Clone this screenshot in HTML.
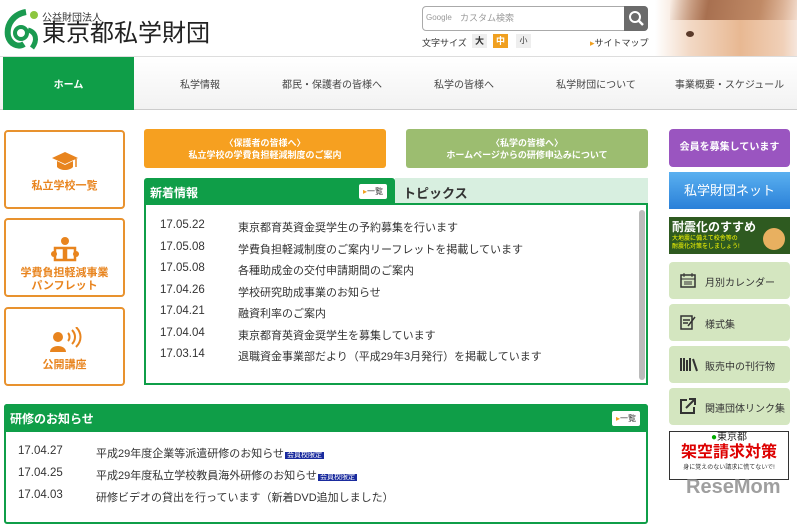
<!DOCTYPE html>
<html><head><meta charset="utf-8"><style>
*{margin:0;padding:0;box-sizing:border-box}
body{width:797px;height:508px;overflow:hidden;background:#fff;font-family:"Liberation Sans","Noto Sans CJK JP",sans-serif;position:relative;color:#333}
.a{position:absolute}
.nav{left:0;top:56px;width:797px;height:54px;background:linear-gradient(#fff,#f2f2f2);border-top:1px solid #ddd;border-bottom:1px solid #ccc}
.nav span{position:absolute;top:19px;font-size:10px;color:#444;text-align:center}
.lb{left:4px;width:121px;height:79px;border:2px solid #e8922e;border-radius:4px;color:#e8841e;font-size:11px;font-weight:bold;text-align:center}
.rb{left:669px;width:121px;height:37px;border-radius:4px;background:#d4e6c0;font-size:10px;color:#333}
.rb span{position:absolute;left:36px;top:12px}
.rb svg{position:absolute;left:10px;top:9px}
.row{position:absolute;font-size:11px;color:#333}
.row b{font-weight:normal;position:absolute;left:0;font-size:11.5px}
.row i{font-style:normal;position:absolute;left:78px;white-space:nowrap}
.tag{background:#1a2b9e;color:#fff;font-size:7px;padding:0 2px;margin-left:1px}
.ichi{background:#fff;border-radius:2px;font-size:8px;color:#333;padding:2px 4px}
.ichi:before{content:"▸";color:#f0a020}
</style></head><body>
<!-- logo -->
<svg class="a" style="left:4px;top:8px" width="40" height="42" viewBox="0 0 40 42"><path d="M22 4C10 6 2 16 4 28c2 8 10 12 16 8" fill="none" stroke="#1a9a50" stroke-width="6"/><circle cx="17" cy="25" r="6" fill="none" stroke="#1a9a50" stroke-width="4"/><path d="M24 22c8 2 10 10 4 18" fill="none" stroke="#1a9a50" stroke-width="5"/><circle cx="30" cy="7" r="4" fill="#8cc63f"/></svg>
<div class="a" style="left:42px;top:9px;font-size:10px;color:#333">公益財団法人</div>
<div class="a" style="left:42px;top:20px;font-size:24px;color:#222;line-height:28px">東京都私学財団</div>
<!-- search -->
<div class="a" style="left:422px;top:6px;width:226px;height:25px;border:1px solid #aaa;border-radius:4px;background:#fff"></div>
<div class="a" style="left:426px;top:13px;font-size:8px;color:#999">Google</div>
<div class="a" style="left:460px;top:11px;font-size:9px;color:#999">カスタム検索</div>
<div class="a" style="left:624px;top:6px;width:24px;height:25px;background:#6b6b6b;border-radius:0 4px 4px 0"></div>
<svg class="a" style="left:627px;top:9px" width="18" height="18"><circle cx="8" cy="8" r="5" fill="none" stroke="#fff" stroke-width="2"/><path d="M12 12l4 4" stroke="#fff" stroke-width="2.5"/></svg>
<div class="a" style="left:422px;top:36px;font-size:9px;color:#333">文字サイズ</div>
<div class="a" style="left:472px;top:34px;width:15px;height:14px;background:#eee;font-size:9px;text-align:center;line-height:14px;font-weight:bold">大</div>
<div class="a" style="left:493px;top:34px;width:15px;height:14px;background:#f0a020;color:#fff;font-size:9px;text-align:center;line-height:14px;font-weight:bold">中</div>
<div class="a" style="left:516px;top:34px;width:15px;height:14px;background:#eee;font-size:8px;text-align:center;line-height:14px">小</div>
<div class="a" style="left:590px;top:36px;font-size:9px;color:#333"><span style="color:#f0a020">▸</span>サイトマップ</div>
<div class="a" style="left:655px;top:0;width:142px;height:56px;background:linear-gradient(90deg,#fff 0%,#f2d8c4 25%,#e8b892 60%,#f0d0b8 90%,#f6e6dc)"></div>
<div class="a" style="left:670px;top:0;width:127px;height:20px;background:linear-gradient(100deg,rgba(255,255,255,0),#a87050 30%,#c08a66 70%,rgba(240,210,190,.5));"></div>
<div class="a" style="left:686px;top:31px;width:8px;height:6px;background:#5a3a2a;border-radius:50%"></div>
<!-- nav -->
<div class="a nav">
<div class="a" style="left:3px;top:0;width:131px;height:53px;background:#0f9e48"></div>
<span style="left:3px;width:131px;color:#fff;font-weight:bold">ホーム</span>
<span style="left:134px;width:132px">私学情報</span>
<span style="left:266px;width:132px">都民・保護者の皆様へ</span>
<span style="left:398px;width:132px">私学の皆様へ</span>
<span style="left:530px;width:132px">私学財団について</span>
<span style="left:662px;width:135px">事業概要・スケジュール</span>
</div>
<!-- left boxes -->
<div class="a lb" style="top:130px"><svg style="margin-top:18px" width="28" height="22" viewBox="0 0 28 22"><path d="M14 2L1 8l13 6 13-6z" fill="#e8841e"/><path d="M6 11v6c4 4 12 4 16 0v-6l-8 4z" fill="#e8841e"/><path d="M25 9v8" stroke="#e8841e" stroke-width="1.5"/></svg><div style="margin-top:2px">私立学校一覧</div></div>
<div class="a lb" style="top:218px"><svg style="margin-top:16px" width="30" height="28" viewBox="0 0 30 28"><circle cx="15" cy="5" r="4" fill="#e8841e"/><path d="M5 12h9v12H5zM16 12h9v12h-9z" fill="none" stroke="#e8841e" stroke-width="2.5"/><circle cx="4" cy="18" r="3" fill="#e8841e"/><circle cx="26" cy="18" r="3" fill="#e8841e"/></svg><div style="line-height:13px">学費負担軽減事業<br>パンフレット</div></div>
<div class="a lb" style="top:307px"><svg style="margin-top:18px" width="34" height="26" viewBox="0 0 34 26"><circle cx="10" cy="10" r="5" fill="#e8841e"/><path d="M2 25c0-8 16-8 16 0z" fill="#e8841e"/><path d="M20 6c2 2 2 6 0 8M24 3c4 4 4 10 0 14M28 0c6 6 6 14 0 20" fill="none" stroke="#e8841e" stroke-width="2"/></svg><div>公開講座</div></div>
<!-- top buttons -->
<div class="a" style="left:144px;top:129px;width:242px;height:39px;background:#f6a020;border-radius:3px;color:#fff;font-size:9px;font-weight:bold;text-align:center;line-height:12px;padding-top:8px">〈保護者の皆様へ〉<br>私立学校の学費負担軽減制度のご案内</div>
<div class="a" style="left:406px;top:129px;width:242px;height:39px;background:#9cbd70;border-radius:3px;color:#fff;font-size:9px;font-weight:bold;text-align:center;line-height:12px;padding-top:8px">〈私学の皆様へ〉<br>ホームページからの研修申込みについて</div>
<!-- news -->
<div class="a" style="left:395px;top:178px;width:253px;height:25px;background:#d8efe0"></div>
<div class="a" style="left:403px;top:183px;font-size:13px;color:#333;font-weight:bold">トピックス</div>
<div class="a" style="left:144px;top:178px;width:251px;height:26px;background:#0f9e48;border-radius:3px 3px 0 0"></div>
<div class="a" style="left:150px;top:184px;font-size:12px;color:#fff;font-weight:bold">新着情報</div>
<div class="a ichi" style="left:359px;top:184px">一覧</div>
<div class="a" style="left:144px;top:203px;width:504px;height:182px;border:2px solid #0f9e48"></div>
<div class="a" style="left:639px;top:210px;width:6px;height:170px;background:#bbb;border-radius:3px"></div>
<div class="row" style="left:160px;top:219px"><b>17.05.22</b><i>東京都育英資金奨学生の予約募集を行います</i></div>
<div class="row" style="left:160px;top:241px"><b>17.05.08</b><i>学費負担軽減制度のご案内リーフレットを掲載しています</i></div>
<div class="row" style="left:160px;top:262px"><b>17.05.08</b><i>各種助成金の交付申請期間のご案内</i></div>
<div class="row" style="left:160px;top:284px"><b>17.04.26</b><i>学校研究助成事業のお知らせ</i></div>
<div class="row" style="left:160px;top:305px"><b>17.04.21</b><i>融資利率のご案内</i></div>
<div class="row" style="left:160px;top:327px"><b>17.04.04</b><i>東京都育英資金奨学生を募集しています</i></div>
<div class="row" style="left:160px;top:348px"><b>17.03.14</b><i>退職資金事業部だより（平成29年3月発行）を掲載しています</i></div>
<!-- training -->
<div class="a" style="left:4px;top:404px;width:644px;height:120px;border:2px solid #0f9e48;border-radius:3px"></div>
<div class="a" style="left:4px;top:404px;width:644px;height:28px;background:#0f9e48;border-radius:3px 3px 0 0"></div>
<div class="a" style="left:10px;top:410px;font-size:12px;color:#fff;font-weight:bold">研修のお知らせ</div>
<div class="a ichi" style="left:612px;top:411px">一覧</div>
<div class="row" style="left:18px;top:445px"><b>17.04.27</b><i>平成29年度企業等派遣研修のお知らせ<span class="tag">会員校限定</span></i></div>
<div class="row" style="left:18px;top:467px"><b>17.04.25</b><i>平成29年度私立学校教員海外研修のお知らせ<span class="tag">会員校限定</span></i></div>
<div class="row" style="left:18px;top:489px"><b>17.04.03</b><i>研修ビデオの貸出を行っています（新着DVD追加しました）</i></div>
<!-- right -->
<div class="a" style="left:669px;top:129px;width:121px;height:38px;background:#9a55c0;border-radius:4px;color:#fff;font-size:10px;font-weight:bold;text-align:center;line-height:38px">会員を募集しています</div>
<div class="a" style="left:669px;top:172px;width:121px;height:37px;background:linear-gradient(#5ab0f0,#2a80d8);color:#fff;font-size:13px;text-align:center;line-height:37px">私学財団ネット</div>
<div class="a" style="left:669px;top:217px;width:121px;height:37px;background:#2e5a20"></div>
<div class="a" style="left:672px;top:218px;font-size:12px;color:#fff;font-weight:bold">耐震化のすすめ</div>
<div class="a" style="left:672px;top:235px;font-size:6px;color:#ff0;line-height:8px">大地震に備えて校舎等の<br>耐震化対策をしましょう!</div>
<div class="a" style="left:763px;top:228px;width:22px;height:22px;background:#e8b060;border-radius:50%"></div>
<div class="a rb" style="top:262px"><svg width="18" height="18"><rect x="2" y="4" width="14" height="12" fill="none" stroke="#333" stroke-width="1.5"/><path d="M2 8h14M5 2v4M13 2v4M5 11h8M5 13h8" stroke="#333"/></svg><span>月別カレンダー</span></div>
<div class="a rb" style="top:304px"><svg width="18" height="18"><rect x="2" y="3" width="11" height="13" fill="none" stroke="#333" stroke-width="1.5"/><path d="M4 7h7M4 10h5M9 13l7-9" stroke="#333" stroke-width="1.5"/></svg><span>様式集</span></div>
<div class="a rb" style="top:346px"><svg width="20" height="18"><path d="M2 3v13M5 3v13M8 5v11M11 3v13M14 4l4 12" stroke="#333" stroke-width="2"/></svg><span>販売中の刊行物</span></div>
<div class="a rb" style="top:388px"><svg width="18" height="18"><path d="M8 3H2v13h13v-6" fill="none" stroke="#333" stroke-width="2"/><path d="M7 11l9-9M10 2h6v6" fill="none" stroke="#333" stroke-width="2"/></svg><span>関連団体リンク集</span></div>
<div class="a" style="left:669px;top:431px;width:120px;height:49px;border:1px solid #333;background:#fff;text-align:center"><div style="font-size:10px;line-height:12px;color:#222"><span style="color:#0a0">●</span>東京都</div><div style="font-size:16px;color:#d00;font-weight:bold;line-height:18px">架空請求対策</div><div style="font-size:6px">身に覚えのない請求に慌てないで!</div></div>
<div class="a" style="left:686px;top:476px;font-size:20px;font-weight:bold;color:#888;opacity:.8">ReseMom</div>
</body></html>
